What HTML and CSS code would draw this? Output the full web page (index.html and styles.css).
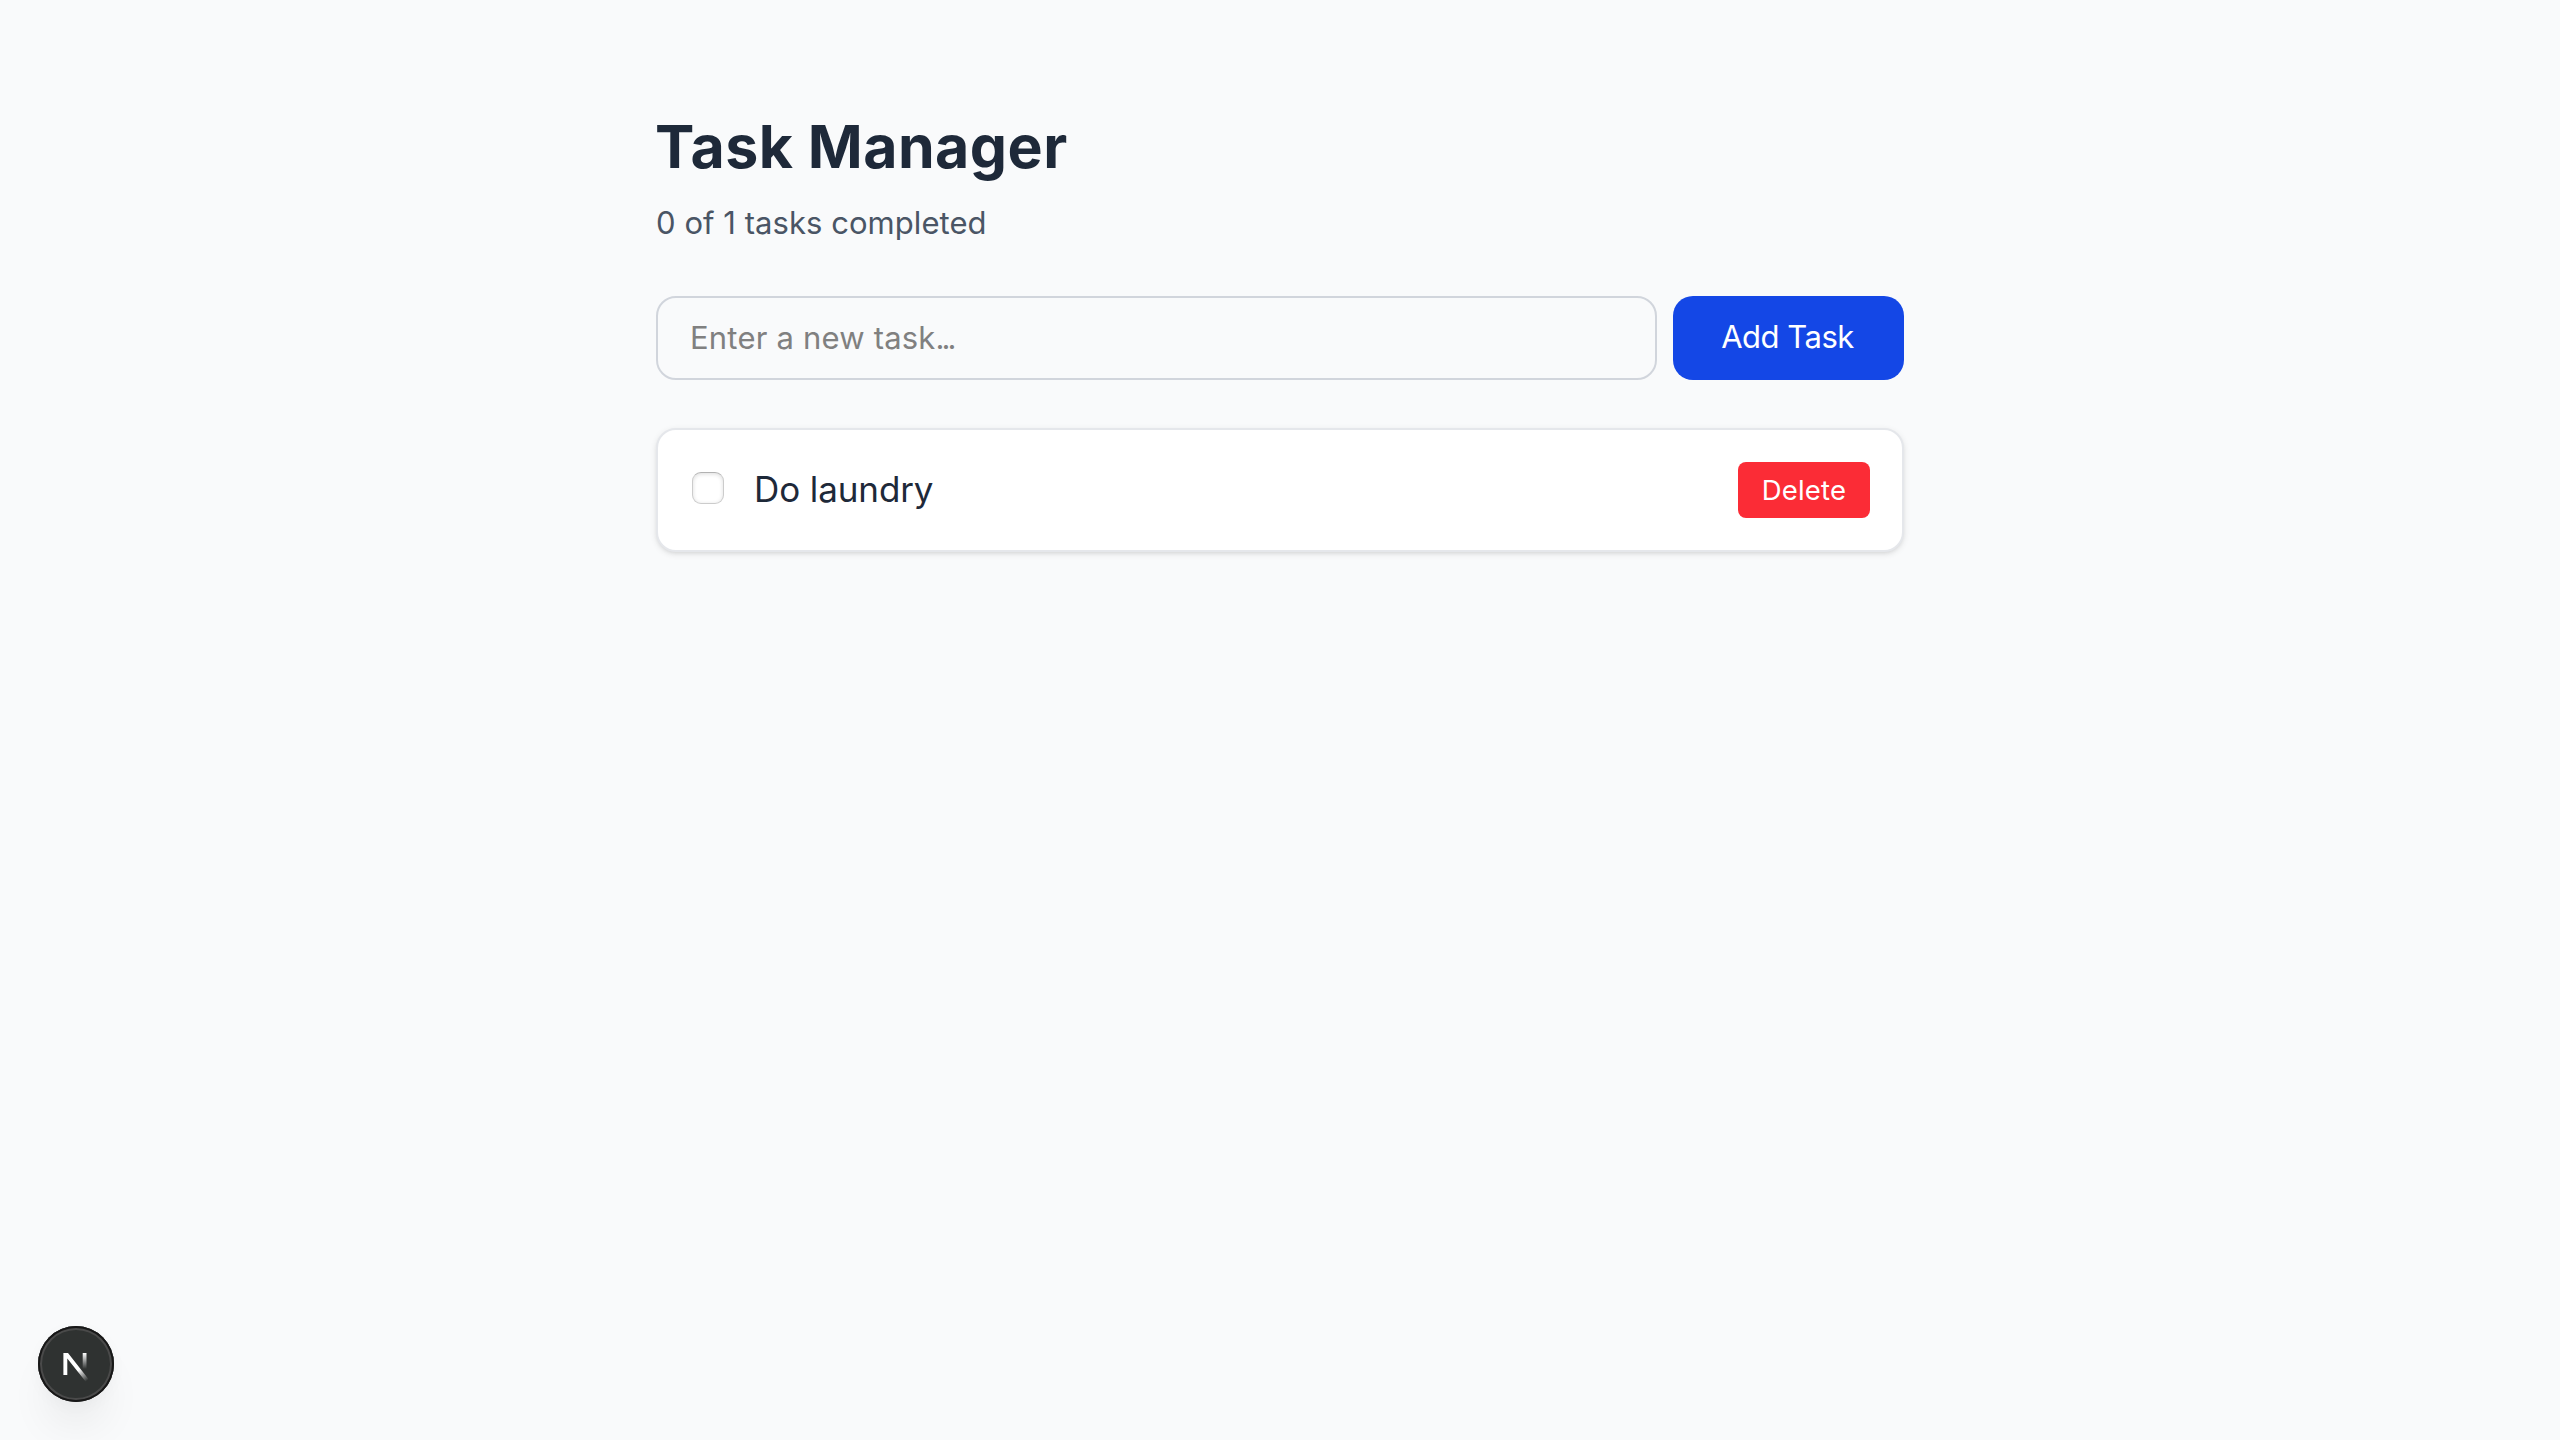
FILE: index.html
```
<!DOCTYPE html>
<html lang="en">
<head>
<meta charset="utf-8">
<title>Task Manager</title>
<link rel="stylesheet" href="styles.css">
</head>
<body>
<main class="container">
  <header class="header">
    <h1 class="title">Task Manager</h1>
    <p class="summary">0 of 1 tasks completed</p>
  </header>
  <form class="new-task">
    <div class="field" role="textbox">Enter a new task<span class="dots">...</span></div>
    <button class="add" type="button">Add Task</button>
  </form>
  <ul class="tasks">
    <li class="task">
      <input class="check" type="checkbox" aria-label="Do laundry">
      <span class="name">Do laundry</span>
      <button class="delete" type="button">Delete</button>
    </li>
  </ul>
</main>
<div class="badge">
  <svg width="76" height="76" viewBox="0 0 76 76">
    <defs>
      <linearGradient id="diag" gradientUnits="userSpaceOnUse" x1="41" y1="43.5" x2="49.5" y2="54.5">
        <stop stop-color="#fff"/><stop offset="1" stop-color="#fff" stop-opacity="0"/>
      </linearGradient>
      <linearGradient id="bar" gradientUnits="userSpaceOnUse" x1="46" y1="27" x2="46" y2="43">
        <stop stop-color="#fff"/><stop offset="1" stop-color="#fff" stop-opacity="0"/>
      </linearGradient>
    </defs>
    <path d="M25.4 27H30L50.6 53.2 47.6 55.5 29.3 32.4V49H25.4z" fill="url(#diag)"/>
    <path d="M44.7 27h3.8v16h-3.8z" fill="url(#bar)"/>
  </svg>
</div>
</body>
</html>
```
FILE: styles.css
```
* { box-sizing: border-box; margin: 0; padding: 0; }

body {
  min-height: 1440px;
  background: #f9fafb;
  color: #1e2939;
  font-family: Inter, "Liberation Sans", sans-serif;
  overflow: hidden;
}

.container {
  width: 1248px;
  margin: 0 auto;
  padding-top: 111px;
}

.title {
  margin-left: -1px;
  font-size: 59px;
  line-height: 72px;
  font-weight: 700;
  letter-spacing: 0.45px;
}

.summary {
  margin-top: 16px;
  color: #4a5565;
  font-size: 31px;
  line-height: 48px;
  letter-spacing: 0.05px;
}

.new-task {
  display: flex;
  gap: 16px;
  margin-top: 49px;
}

.field {
  flex: 1;
  height: 84px;
  padding: 0 32px;
  border: 2px solid #d1d5dc;
  border-radius: 20px;
  color: #808080;
  font-size: 31px;
  line-height: 80px;
  letter-spacing: 0.2px;
}

.dots { letter-spacing: -3px; }

button {
  border: 0;
  color: #fff;
  font-family: inherit;
}

.add {
  width: 231px;
  height: 84px;
  padding: 0 2px 3px 0;
  border-radius: 20px;
  background: #1447e6;
  font-size: 31px;
  letter-spacing: -0.5px;
}

.tasks {
  margin-top: 48px;
  list-style: none;
}

.task {
  display: flex;
  align-items: center;
  height: 124px;
  padding: 0 32px;
  border: 2px solid #e5e7eb;
  border-radius: 20px;
  background: #fff;
  box-shadow: 0 2px 6px rgba(0, 0, 0, 0.1), 0 2px 4px -2px rgba(0, 0, 0, 0.1);
}

.check {
  appearance: none;
  width: 32px;
  height: 32px;
  margin: 0 30px 4px 2px;
  border: 1px solid rgba(0, 0, 0, 0.2);
  border-top-color: rgba(0, 0, 0, 0.3);
  border-radius: 9px;
  background: #fff;
  box-shadow: inset 0 1px 4px rgba(0, 0, 0, 0.14);
}

.name {
  flex: 1;
  padding-bottom: 2px;
  font-size: 35px;
  letter-spacing: -0.1px;
}

.delete {
  width: 132px;
  height: 56px;
  border-radius: 8px;
  background: #fb2c36;
  font-size: 27.5px;
  letter-spacing: 0.2px;
}

.badge {
  position: absolute;
  left: 38px;
  bottom: 38px;
  width: 76px;
  height: 76px;
  border-radius: 50%;
  background: #2f3231;
  box-shadow: inset 0 0 0 2px #171717, inset 0 0 0 4px #4a4a4a, 0 32px 48px -16px rgba(0, 0, 0, 0.12), 0 4px 16px rgba(0, 0, 0, 0.03);
}
```
